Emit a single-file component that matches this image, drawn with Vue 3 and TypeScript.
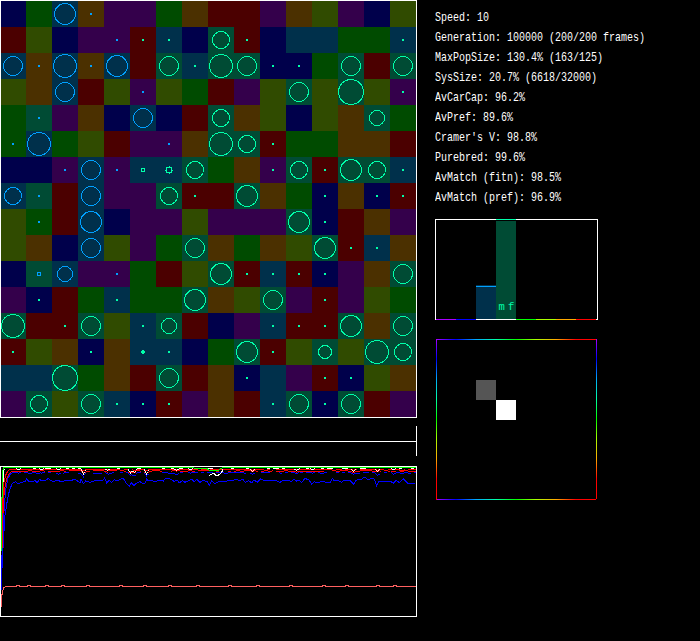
<script setup lang="ts">
type Point = [number, number]

const CELL = 26

const dark: Record<string, string> = {
  N: '#00004b', G: '#004b00', B: '#00304b', O: '#4b3000',
  P: '#34004b', R: '#4b0000', Y: '#304b00', T: '#004b34',
}

const rows: string[] = [
  'NGBOPPGORRPOYPNY',
  'RYNPPRBNTRNBBGGB',
  'BOBOBRTBTTNNGTRT',
  'YOBRYPYGRPYTYTYP',
  'GTPONBNRTOYNYOTG',
  'GBGYRPPOTTRGGOOR',
  'NNPBPBBTGOPTRTTB',
  'BTRBPPTRRTOGNONR',
  'YGRBNPPYPPPTNROP',
  'YONBYPGTOGOYTRBO',
  'NTBPPGRYTRBRNPOT',
  'PNRGBGGTOYTPRPYG',
  'TRRTYBTRNPBRRTOT',
  'RYONOBBNGTRYTYTT',
  'BBTGORTRONBPRNYO',
  'PTYTBNRPORBTNTRP',
]

// Each entry is column + species (b = azure, g = teal) + outer radius; radius 1 is a dot.
const population: string[] = [
  '2b11 3b1',
  '4b1 5g1 6g1 8g9 9g1 15g1',
  '0b10 1b1 2b12 3b1 4b11 6g10 7g1 8g12 9g10 10g1 11g1 13g10 15g10',
  '2b10 5b1 11g10 13g13 15g1',
  '1b1 5b10 8g9 14g8',
  '0b1 1b12 6b1 8g12 9g9 10g1',
  '2b1 3b10 4b1 5g2 6g3 7g9 10g1 11g9 12g1 13g11 14g9 15g1',
  '0b9 1b1 3b10 6g9 7g1 9g11 12g1 14g1 15g1',
  '1b1 3b11 11g11 12g1',
  '3b10 7g10 12g11 13g1 14g1',
  '1b2 2b8 4b1 8g11 9g1 10g1 11g1 12g1 15g10',
  '1g1 4g1 7g11 10g10 12g1',
  '0g12 2g1 3g10 5g1 6g8 10g1 11g1 12g1 13g11 15g10',
  '0g1 3g1 5g0 6g1 9g11 10g1 12g7 14g12 15g9',
  '2g13 6g10 9g1 12g1 13g1',
  '1g9 3g10 4g1 5g1 6g1 10g1 11g10 12g1 13g10',
]

const cells = rows.flatMap((row, r) =>
  [...row].map((k, c) => ({ key: `${r}-${c}`, x: c * CELL, y: 1 + r * CELL, fill: dark[k] })),
)

const demes = population.flatMap((line, r) =>
  line.split(' ').map((item) => {
    const m = /^(\d+)([bg])(\d+)$/.exec(item)!
    return {
      key: `${r}-${m[1]}`,
      x: Number(m[1]) * CELL + 13,
      y: 14 + r * CELL,
      color: m[2] === 'b' ? '#00a0ff' : '#00ffaa',
      r: Number(m[3]),
    }
  }),
)

// History samples, stored in thirds of a pixel below y = 415.
function trace(points: Point[]): string {
  return points.map(([x, y]) => `${(x / 3).toFixed(1)},${(y / 3 - 51).toFixed(1)}`).join(' ')
}

const shift = (points: Point[], dx: number): Point[] => points.map(([x, y]) => [x + dx, y])

const prefTrace = trace([
  [4, 520], [6, 460], [9, 400], [12, 350], [15, 300], [20, 268], [25, 240], [31, 220],
  [37, 205], [46, 200], [55, 207], [62, 202], [75, 200], [80, 192], [86, 199], [95, 201],
  [105, 197], [112, 203], [118, 193], [127, 198], [138, 195], [145, 190], [152, 197],
  [162, 200], [172, 195], [185, 201], [195, 196], [215, 196], [225, 192], [235, 200],
  [240, 203], [243, 193], [250, 206], [257, 198], [270, 202], [285, 197], [307, 197],
  [314, 189], [320, 204], [328, 196], [335, 203], [342, 194], [352, 197], [360, 193],
  [370, 190], [380, 207], [388, 213], [395, 203], [402, 213], [408, 205],
  ...shift([
    [0, 200], [8, 206], [15, 205], [20, 192], [25, 198], [35, 196], [45, 200], [57, 195],
    [70, 198], [75, 191], [90, 192], [102, 199], [112, 196], [118, 204], [127, 197],
    [135, 202], [145, 197], [155, 192], [163, 200], [170, 193], [180, 202], [190, 196],
    [203, 201], [208, 211], [215, 198], [225, 206], [240, 198], [262, 198], [275, 197],
    [290, 192], [298, 197], [308, 193], [316, 202], [325, 197], [335, 203], [342, 195],
    [352, 202], [362, 191], [372, 197], [380, 195], [405, 196],
  ], 420),
  ...shift([
    [0, 202], [12, 195], [22, 196], [35, 199], [42, 192], [50, 199], [57, 196], [65, 203],
    [75, 190], [88, 196], [95, 208], [103, 200], [112, 204], [125, 199], [135, 201],
    [150, 203], [157, 190], [163, 198], [172, 196], [185, 202], [192, 196], [210, 196],
    [221, 207], [228, 196], [245, 192], [255, 186], [265, 195], [277, 189], [284, 194],
    [290, 212], [298, 198], [315, 200], [330, 198], [340, 205], [348, 196], [358, 203],
    [370, 191], [385, 206], [405, 205],
  ], 840),
])

const noise = (i: number, seed: number): number => {
  const v = Math.sin(i * 12.9898 + seed * 78.233) * 43758.5453
  return v - Math.floor(v)
}

// Column and depth, in pixels, of the moments where the population fell out of step.
const dips: Point[] = [
  [18, 1], [41, 1], [58, 1], [83, 6], [107, 2], [130, 5], [134, 4], [146, 6], [176, 2], [190, 1],
  [252, 3], [296, 2], [312, 1], [353, 3], [377, 3], [393, 1],
]

function band(from: number, row: number, seed: number, wobble: number, gain: number, cover: number): string {
  let d = ''
  let last = row
  for (let x = from; x < 416; x++) {
    let y = row + (noise(Math.floor(x / 4), seed) < wobble ? 1 : 0)
    let dipping = false
    for (const [at, depth] of dips) {
      const near = Math.abs(x - at)
      if (near < 3) {
        y += Math.round(depth * gain * (1 - near / 3))
        dipping = true
      }
    }
    if (dipping || noise(Math.floor(x / 3), seed + 5) < cover) {
      const top = Math.min(y, last + (y > last ? 1 : 0))
      d += `M${x} ${top}h1v${y - top + 1}h-1z`
    }
    last = y
  }
  return d
}

const blueHead = trace([[4, 525], [6, 420], [10, 330], [13, 270], [18, 220], [24, 190], [31, 177], [37, 174]])
const redLowHead = trace([[6, 400], [8, 330], [10, 260], [14, 220], [20, 190], [29, 174], [36, 169]])
const redHighHead = trace([[6, 310], [9, 250], [12, 200], [17, 180], [25, 166], [33, 163]])
const whiteHead = trace([[9, 200], [9, 175], [13, 161]])
const blueBand = band(12, 6, 3, 0.25, 0.6, 0.62)
const redLowBand = band(11, 4, 8, 0.6, 0.3, 0.82)
const redHighBand = band(10, 3, 2, 0.08, 0.2, 0.96)
const whiteBand = band(5, 2, 11, 0, 0.95, 0.3)
const wideDip = trace([[628, 182], [634, 178], [641, 174], [647, 181], [655, 181], [662, 175], [667, 169], [669, 161]])
const greenTrace = trace([
  [4.5, 408], [4.5, 250], [7.5, 245], [7.5, 175], [10, 160], [13, 157.5], [400, 157.5], [578, 157.5],
  [588, 160.5], [620, 160.5], [626, 165], [656, 165], [668, 157.5], [1248, 157.5],
])

const carTrace = (() => {
  const points = ['1.5,141', '1.5,130', '2.5,127', '3.5,122', '5.5,120.5']
  for (const x of [18, 29, 47, 63, 88, 121, 145, 170, 198, 230, 258, 291, 324, 347, 378, 395]) {
    points.push(`${x - 2},120.5`, `${x - 1},119.5`, `${x + 1},119.5`, `${x + 2},120.5`)
  }
  points.push('416,120.5')
  return points.join(' ')
})()

const stats: string[] = [
  'Speed: 10',
  'Generation: 100000 (200/200 frames)',
  'MaxPopSize: 130.4% (163/125)',
  'SysSize: 20.7% (6618/32000)',
  'AvCarCap: 96.2%',
  'AvPref: 89.6%',
  "Cramer's V: 98.8%",
  'Purebred: 99.6%',
  'AvMatch (fitn): 98.5%',
  'AvMatch (pref): 96.9%',
]

const axis: string[] = ['#aa00ff', '#0000ff', '#ffffff', '#ffffff', '#00ff00', '#aaff00', '#ffaa00', '#ff0000']
</script>

<template>
  <main class="sim">
    <section class="left">
      <svg class="board" width="417" height="418" viewBox="0 0 417 418" shape-rendering="crispEdges">
        <rect v-for="c in cells" :key="c.key" :x="c.x" :y="c.y" width="26" height="26" :fill="c.fill" />
        <rect x="0.5" y="0.5" width="416" height="417" fill="none" stroke="#fff" />
        <template v-for="d in demes" :key="d.key">
          <path
            v-if="d.r === 0"
            :transform="`translate(${d.x} ${d.y})`"
            d="M-1-2h2v1h1v2h-1v1h-2v-1h-1v-2h1z"
            :fill="d.color"
          />
          <rect v-else-if="d.r === 1" :x="d.x - 1" :y="d.y - 1" width="2" height="2" :fill="d.color" />
          <rect
            v-else-if="d.r === 2"
            :x="d.x - 1.5"
            :y="d.y - 1.5"
            width="3"
            height="3"
            fill="none"
            :stroke="d.color"
          />
          <path
            v-else-if="d.r === 3"
            :transform="`translate(${d.x} ${d.y})`"
            d="M-2.5-2.5h5v5h-5zM0-4v1M0 4v-1M-4 0h1M4 0h-1"
            fill="none"
            :stroke="d.color"
          />
          <circle v-else :cx="d.x" :cy="d.y" :r="d.r - 0.5" fill="none" :stroke="d.color" />
        </template>
      </svg>

      <svg class="strip" width="417" height="30" viewBox="0 0 417 30" shape-rendering="crispEdges">
        <rect x="0" y="15" width="417" height="1" fill="#fff" />
        <rect x="416" y="0" width="1" height="30" fill="#fff" />
      </svg>

      <svg class="history" width="417" height="151" viewBox="0 0 417 151" shape-rendering="crispEdges">
        <g fill="none" stroke-width="1">
          <polyline :points="carTrace" stroke="#ff6060" />
          <polyline :points="prefTrace" stroke="#0000ff" />
          <polyline :points="blueHead" stroke="#0000ff" />
          <path :d="blueBand" fill="#0000ff" />
          <polyline :points="redLowHead" stroke="#ff0000" />
          <path :d="redLowBand" fill="#ff0000" />
          <polyline :points="redHighHead" stroke="#ff0000" />
          <path :d="redHighBand" fill="#ff0000" />
          <polyline :points="whiteHead" stroke="#ffffff" />
          <path :d="whiteBand" fill="#ffffff" />
          <polyline :points="wideDip" stroke="#ffffff" />
          <polyline :points="greenTrace" stroke="#00ff00" />
          <rect x="0.5" y="0.5" width="416" height="150" stroke="#fff" />
        </g>
      </svg>
    </section>

    <section class="right">
      <ul class="stats">
        <li v-for="s in stats" :key="s"><span>{{ s }}</span></li>
      </ul>

      <svg class="bars" width="163" height="101" viewBox="0 0 163 101" shape-rendering="crispEdges">
        <rect x="0.5" y="0.5" width="162" height="100" fill="none" stroke="#fff" />
        <rect x="41" y="66" width="20" height="34" fill="#00304b" />
        <rect x="41" y="67" width="20" height="1" fill="#00a0ff" />
        <rect x="61" y="2" width="20" height="98" fill="#004b34" />
        <rect x="61" y="0" width="20" height="1" fill="#00ffaa" />
        <rect v-for="(c, i) in axis" :key="i" :x="1 + i * 20" y="100" width="20" height="1" :fill="c" />
        <text class="label" x="63.5" y="91">m</text>
        <text class="label" x="73" y="91">f</text>
      </svg>

      <svg class="matrix" width="161" height="161" viewBox="0 0 161 161" shape-rendering="crispEdges">
        <defs>
          <linearGradient id="across" gradientUnits="userSpaceOnUse" x1="0" y1="0" x2="160" y2="0">
            <stop offset="0" stop-color="#aa00ff" />
            <stop offset="0.125" stop-color="#0000ff" />
            <stop offset="0.25" stop-color="#00aaff" />
            <stop offset="0.375" stop-color="#00ffaa" />
            <stop offset="0.5" stop-color="#00ff00" />
            <stop offset="0.625" stop-color="#aaff00" />
            <stop offset="0.75" stop-color="#ffaa00" />
            <stop offset="0.875" stop-color="#ff0000" />
          </linearGradient>
          <linearGradient id="down" href="#across" x1="0" y1="0" x2="0" y2="160" />
        </defs>
        <rect width="161" height="1" fill="url(#across)" />
        <rect y="160" width="160" height="1" fill="url(#across)" />
        <rect width="1" height="161" fill="url(#down)" />
        <rect x="160" width="1" height="160" fill="url(#down)" />
        <rect x="40" y="41" width="20" height="20" fill="#555" />
        <rect x="60" y="61" width="20" height="20" fill="#fff" />
      </svg>
    </section>
  </main>
</template>

<style>
body {
  margin: 0;
  background: #000;
}
</style>

<style scoped>
.sim {
  display: flex;
  gap: 18px;
  width: 700px;
  height: 641px;
  overflow: hidden;
  background: #000;
}
.left,
.right {
  display: flex;
  flex-direction: column;
  align-items: flex-start;
}
svg {
  display: block;
  flex: none;
}
.strip {
  margin-top: 8px;
}
.history {
  margin-top: 10px;
}
.stats {
  margin: 0;
  padding: 8px 0 11px;
  list-style: none;
  color: #fff;
  font-family: 'Liberation Mono', 'DejaVu Sans Mono', monospace;
  font-size: 10px;
}
.stats li {
  height: 20px;
  line-height: 20px;
  white-space: pre;
}
.stats span {
  display: inline-block;
  transform: scaleY(1.33);
}
.label {
  font-family: 'Liberation Mono', 'DejaVu Sans Mono', monospace;
  font-size: 10.5px;
  fill: #00ffaa;
}
.matrix {
  margin: 19px 0 0 1px;
}
</style>
